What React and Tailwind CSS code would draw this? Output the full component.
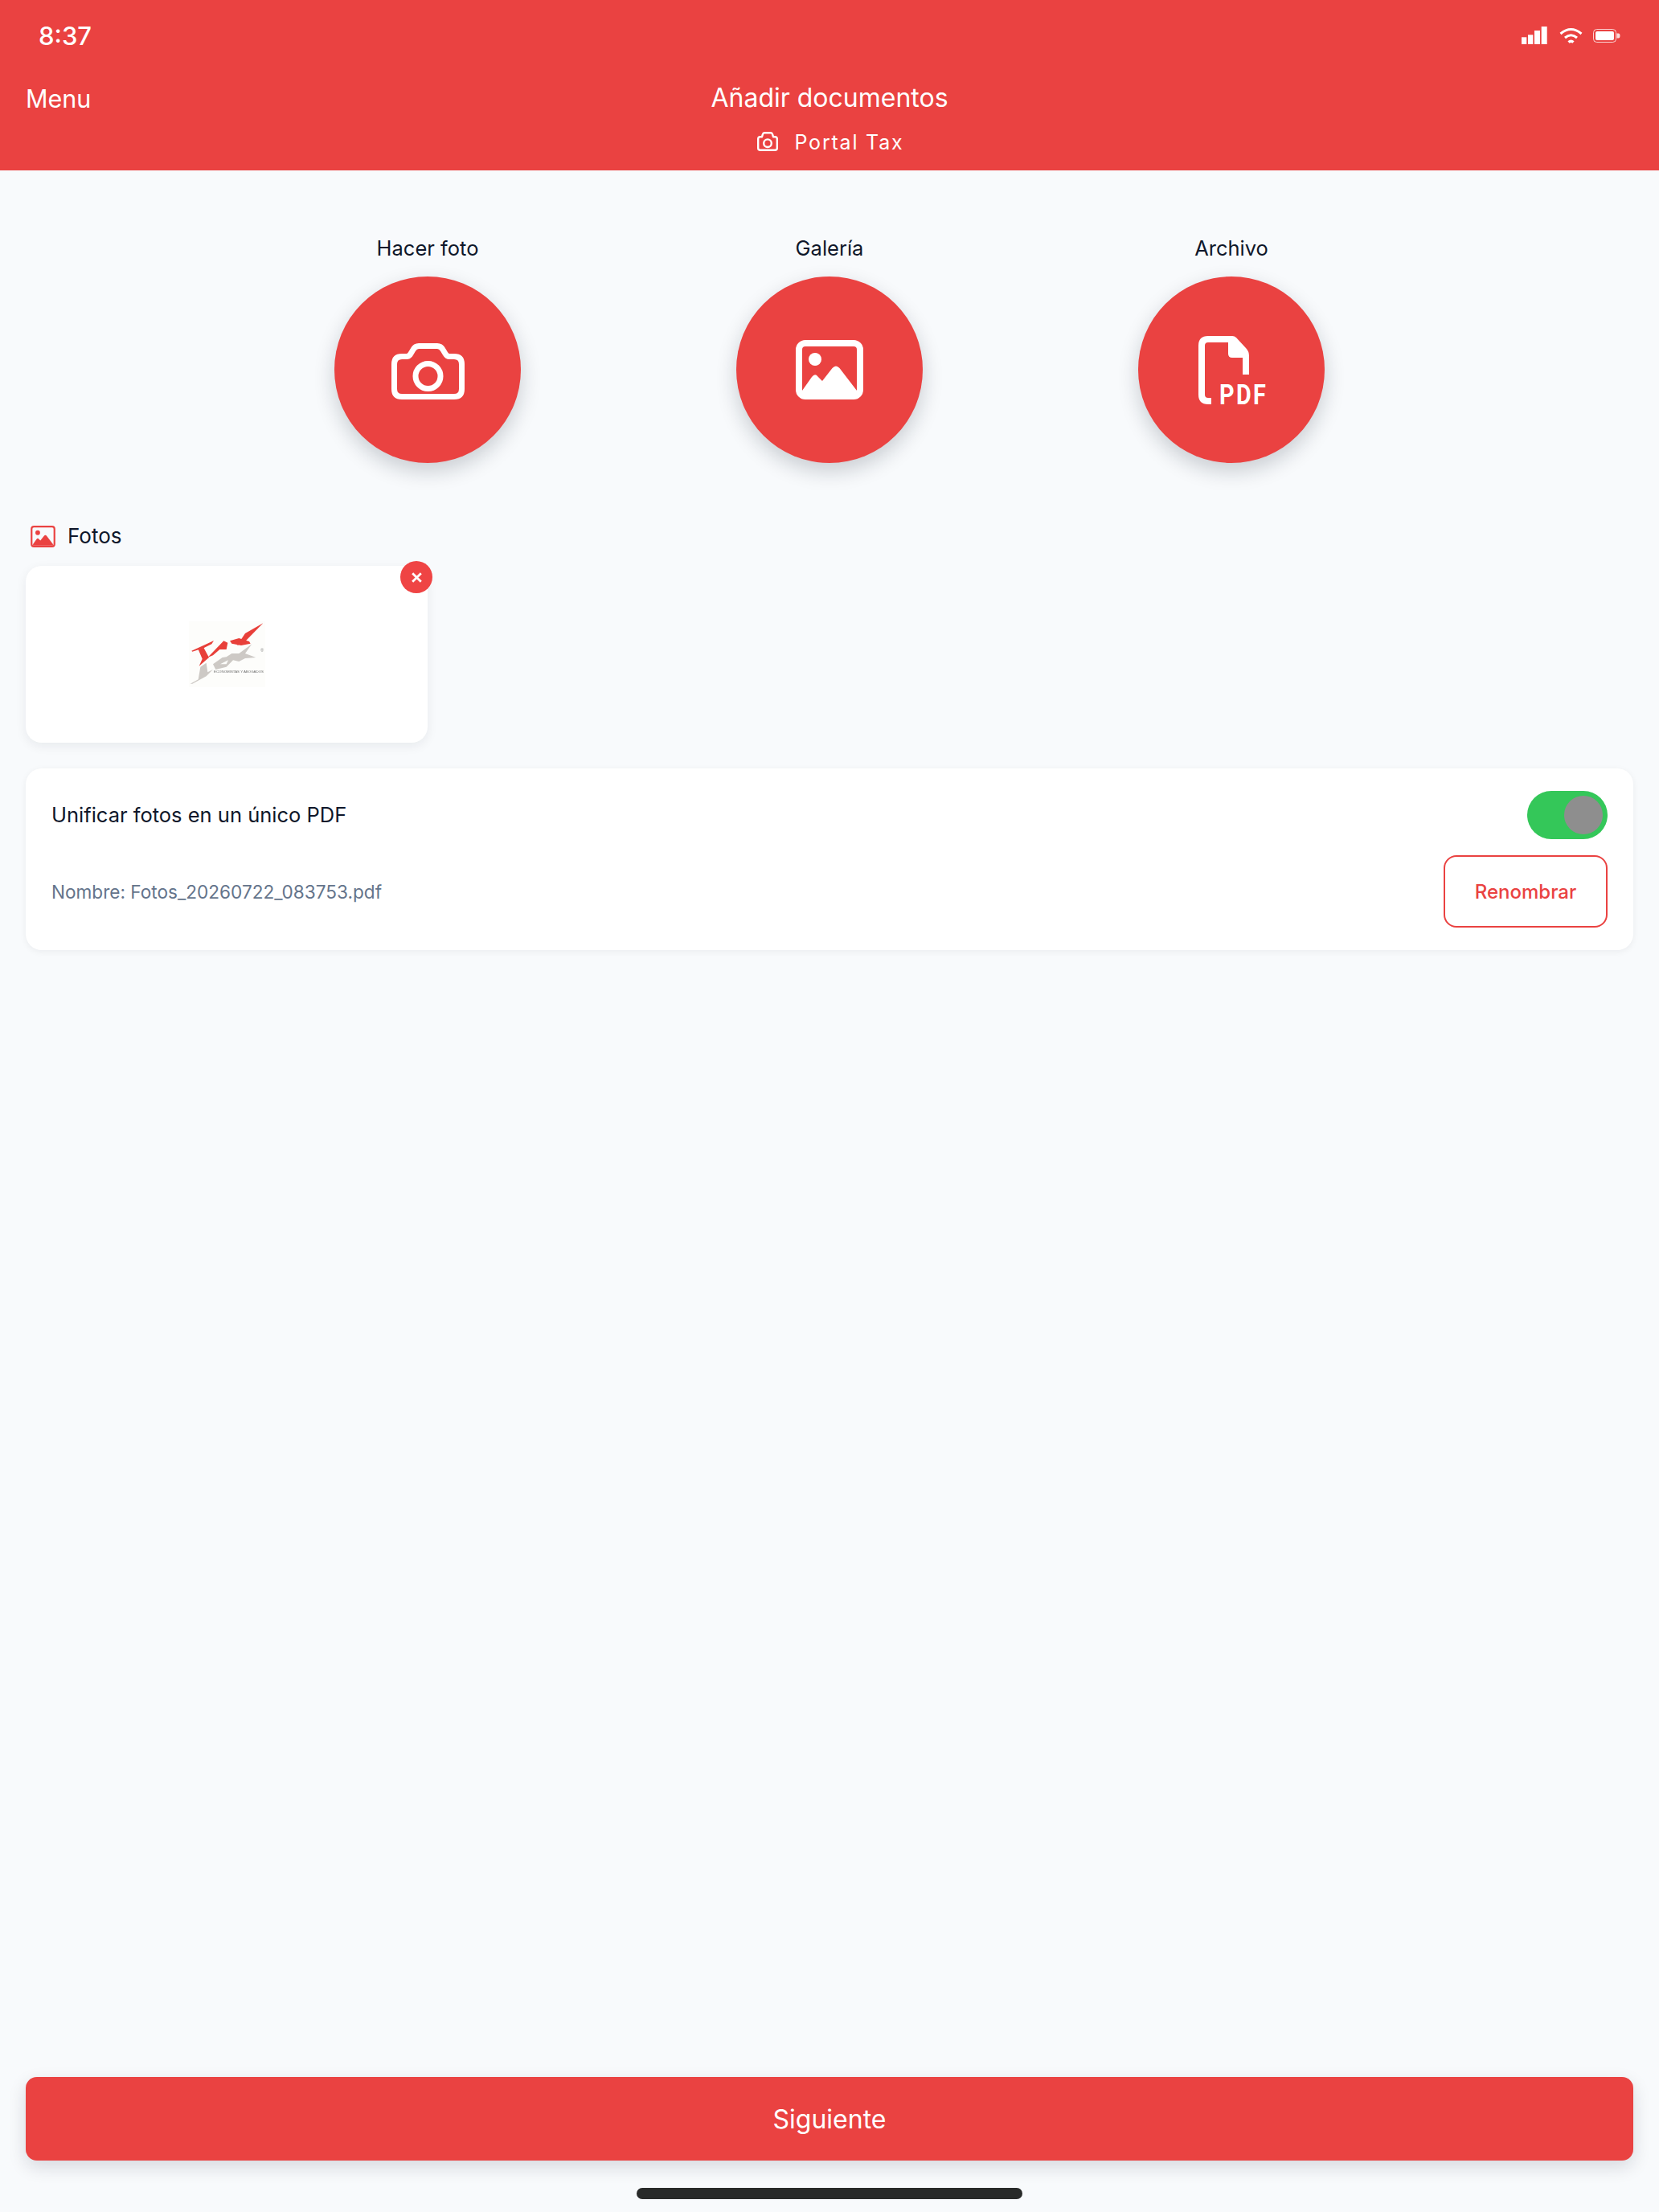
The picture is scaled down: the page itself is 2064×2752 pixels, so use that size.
import React from "react";

function CameraIcon({ className }) {
  return (
    <svg viewBox="0 0 91 70" className={className} fill="none" stroke="currentColor" strokeWidth="7" strokeLinejoin="round">
      <path d="M13 16.5H19Q22 16.5 24 13L27 8Q29.5 3.5 34 3.5H57Q61.5 3.5 64 8L67 13Q69 16.5 72 16.5H78Q87.5 16.5 87.5 26V57Q87.5 66.5 78 66.5H13Q3.5 66.5 3.5 57V26Q3.5 16.5 13 16.5Z" />
      <circle cx="45.5" cy="41" r="15.5" />
    </svg>
  );
}

function SmallCameraIcon({ className }) {
  return (
    <svg viewBox="0 0 26 24" className={className} fill="none" stroke="currentColor" strokeWidth="2.4" strokeLinejoin="round">
      <path d="M3.8 6.2H6L7 2.8Q7.4 1.2 9 1.2H17Q18.6 1.2 19 2.8L20 6.2H22.2Q24.8 6.2 24.8 8.8V20.2Q24.8 22.8 22.2 22.8H3.8Q1.2 22.8 1.2 20.2V8.8Q1.2 6.2 3.8 6.2Z" />
      <circle cx="13" cy="14.2" r="4.8" />
    </svg>
  );
}

function GalleryIcon({ className, thin }) {
  const inset = thin ? 3 : 4;
  return (
    <svg viewBox="0 0 84 74" className={className} fill="currentColor">
      <rect x={inset} y={inset} width={84 - inset * 2} height={74 - inset * 2} rx="8" fill="none" stroke="currentColor" strokeWidth={inset * 2} />
      <circle cx="24" cy="24" r="8" />
      <path d="M8 63L20 46Q24 41 27.5 45.5L33 51L45.5 35Q50 30 54.5 35L76 63V68H8Z" />
    </svg>
  );
}

function PdfIcon({ className }) {
  return (
    <svg viewBox="0 0 82 85" className={`${className} overflow-visible`} fill="currentColor">
      <path d="M16 81H12Q4 81 4 73V12Q4 4 12 4H40" fill="none" stroke="currentColor" strokeWidth="8" />
      <path d="M37 0H42Q45 0 47 2L59 15Q63 19 63 25V48H55V27H42Q37 27 37 22Z" />
      <text transform="translate(26 85) scale(0.8 1)" fontSize="36" fontWeight="700" letterSpacing="3" fontFamily="Roboto, sans-serif">PDF</text>
    </svg>
  );
}

function TaxLogo({ className }) {
  return (
    <svg viewBox="75 45 285 246" className={className}>
      <rect x="75" y="45" width="285" height="246" fill="#fdfdfb" />
      <path d="M80 278L110 262L118 215L140 200L145 235L165 225L140 250L88 278Z" fill="#cdc9c5" />
      <path d="M165 205L200 180L215 178L235 165L262 165L310 130L285 165L325 180L285 183L262 195L240 190L215 215L175 225Z" fill="#cdc9c5" />
      <path d="M192 205L222 190L215 205Z" fill="#fdfdfb" />
      <path d="M85 155L168 117L160 130L130 145L88 158Z" fill="#e8403a" />
      <path d="M110 150L130 143L150 180L113 212L125 185Z" fill="#e8403a" />
      <path d="M145 180L205 118L220 125L215 150L190 150L165 172Z" fill="#e8403a" />
      <path d="M352 52L285 90L255 135L280 125Z" fill="#e8403a" />
      <path d="M228 118L262 108L300 120L305 128L270 135L235 128Z" fill="#e8403a" />
      <text x="342" y="160" fontSize="17" fill="#8a8a8a" fontFamily="Liberation Sans, sans-serif">®</text>
      <text x="168" y="236" fontSize="11" fill="#6a6a6a" fontFamily="Liberation Sans, sans-serif" textLength="186" lengthAdjust="spacingAndGlyphs">ECONOMISTAS Y ABOGADOS</text>
    </svg>
  );
}

function StatusIcons() {
  return (
    <div className="flex items-center">
      <svg viewBox="0 0 32 22" className="w-[32px] h-[22px]" fill="white">
        <rect x="0" y="13.3" width="6.3" height="8.7" />
        <rect x="8" y="10.3" width="6.3" height="11.7" />
        <rect x="16" y="5" width="7" height="17" />
        <rect x="24.7" y="0" width="7" height="22" />
      </svg>
      <svg viewBox="0 0 29 20" className="ml-[15px] w-[29px] h-[20px]" fill="none" stroke="white" strokeWidth="3">
        <path d="M1.5 8Q14.5 -3 27.5 8" />
        <path d="M7 13Q14.5 6.5 22 13" />
        <path d="M11.5 18.5Q14.5 16 17.5 18.5" strokeWidth="3.4" />
      </svg>
      <svg viewBox="0 0 34 17" className="ml-[13px] w-[34px] h-[17px]" fill="white">
        <rect x="0.5" y="0.5" width="28" height="16" rx="4" fill="none" stroke="white" strokeOpacity="0.75" />
        <rect x="3" y="3" width="23" height="11" rx="2" />
        <path d="M29.5 5.5H31.5Q33.5 5.5 33.5 8.5Q33.5 11.5 31.5 11.5H29.5Z" fillOpacity="0.8" />
      </svg>
    </div>
  );
}

function ActionButton({ label, children }) {
  return (
    <div className="w-[500px] flex flex-col items-center">
      <span className="h-[34px] text-[25.5px] leading-[34px] text-[#0f172a]">{label}</span>
      <div className="mt-[18px] w-[232px] h-[232px] rounded-full bg-[#ea4241] text-white flex items-center justify-center shadow-[0_10px_26px_rgba(15,23,42,0.2)]">
        {children}
      </div>
    </div>
  );
}

export default function App() {
  return (
    <div className="w-[2064px] h-[2752px] flex flex-col bg-[#f8fafc] font-['Inter',sans-serif] overflow-hidden">
      <header className="h-[212px] shrink-0 bg-[#ea4241] text-white">
        <div className="h-[100px] pl-[48px] pr-[48px] pb-[12px] flex items-center justify-between">
          <span className="text-[31px] font-medium leading-none">8:37</span>
          <StatusIcons />
        </div>
        <div className="grid grid-cols-[1fr_auto_1fr] px-[32px]">
          <span className="text-[30.5px] leading-[44px] pt-[1px]">Menu</span>
          <div className="flex flex-col items-center">
            <span className="text-[32px] leading-[44px]">Añadir documentos</span>
            <div className="mt-[17px] pl-[3px] flex items-center">
              <SmallCameraIcon className="w-[26px] h-[24px] -mt-[2px]" />
              <span className="ml-[20px] text-[25px] leading-[32px] tracking-[1.8px]">Portal Tax</span>
            </div>
          </div>
          <span />
        </div>
      </header>

      <main className="flex-1 flex flex-col px-[32px] min-h-0">
        <div className="pt-[80px] flex justify-center">
          <ActionButton label="Hacer foto">
            <CameraIcon className="w-[91px] h-[70px] mt-[4px]" />
          </ActionButton>
          <ActionButton label="Galería">
            <GalleryIcon className="w-[84px] h-[74px]" />
          </ActionButton>
          <ActionButton label="Archivo">
            <PdfIcon className="w-[82px] h-[85px]" />
          </ActionButton>
        </div>

        <div className="mt-[72px] h-[38px] pl-[6px] flex items-center">
          <GalleryIcon thin className="w-[31px] h-[27px] text-[#ea4241]" />
          <span className="ml-[15px] text-[26px] leading-[38px] text-[#0f172a]">Fotos</span>
        </div>

        <div className="relative mt-[18px] w-[500px] h-[220px] rounded-[20px] bg-white shadow-[0_4px_14px_rgba(15,23,42,0.07)] flex items-center justify-center">
          <TaxLogo className="w-[95px] h-[82px] blur-[0.4px]" />
          <button className="absolute -top-[6px] -right-[6px] w-[40px] h-[40px] rounded-full bg-[#ef4444] flex items-center justify-center">
            <svg viewBox="0 0 13 13" className="w-[13px] h-[13px]" stroke="white" strokeWidth="2.8" fill="none">
              <path d="M1.2 1.2L11.8 11.8M11.8 1.2L1.2 11.8" />
            </svg>
          </button>
        </div>

        <div className="mt-[32px] h-[226px] rounded-[20px] bg-white shadow-[0_2px_8px_rgba(15,23,42,0.06)] pl-[32px] pr-[32px] pt-[28px]">
          <div className="h-[60px] flex items-center justify-between">
            <span className="text-[25.5px] text-[#0f172a] pt-[1px]">Unificar fotos en un único PDF</span>
            <div className="w-[100px] h-[60px] rounded-full bg-[#34c759] flex items-center justify-end pr-[6px]">
              <div className="w-[48px] h-[48px] rounded-full bg-[#8e8e8e]" />
            </div>
          </div>
          <div className="mt-[20px] flex items-center justify-between">
            <span className="text-[22.6px] text-[#64748b] pt-[2px]">Nombre: Fotos_20260722_083753.pdf</span>
            <button className="w-[204px] h-[90px] pt-[2px] rounded-[16px] border-2 border-[#ea4241] text-[24px] font-medium text-[#ea4241]">Renombrar</button>
          </div>
        </div>

        <div className="flex-1" />

        <button className="h-[104px] pt-[2px] shrink-0 rounded-[14px] bg-[#ea4241] text-white text-[32px] shadow-[0_8px_22px_rgba(15,23,42,0.14)]">Siguiente</button>
      </main>

      <div className="h-[64px] shrink-0 flex justify-center pt-[34px]">
        <div className="w-[480px] h-[14px] rounded-full bg-[#282a29]" />
      </div>
    </div>
  );
}
